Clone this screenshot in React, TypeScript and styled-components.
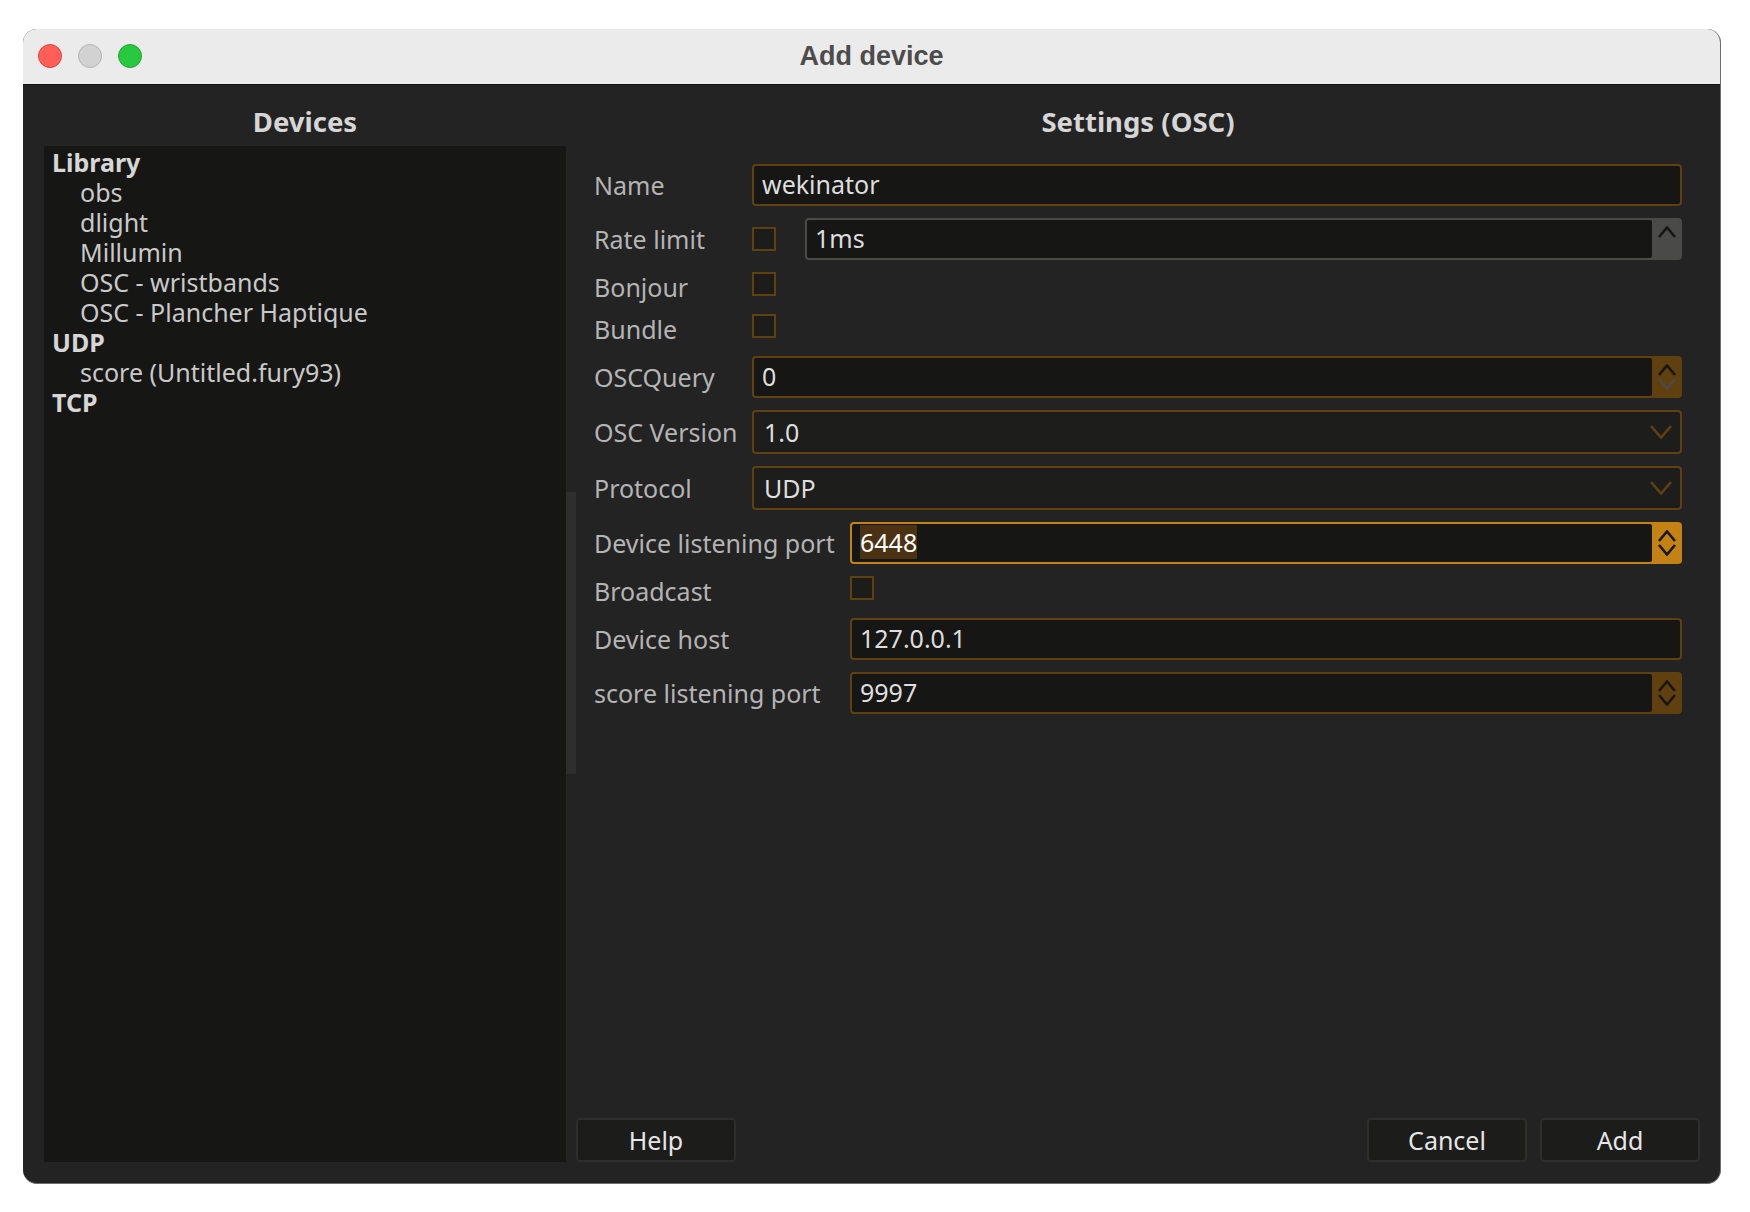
import React from "react";
import styled, { createGlobalStyle } from "styled-components";

const GlobalStyle = createGlobalStyle`
	html, body {
		margin: 0;
		padding: 0;
		background: #ffffff;
	}
	* {
		box-sizing: border-box;
	}
`;

const UI_FONT = `"Noto Sans", "Open Sans", sans-serif`;
const ORANGE_DIM = "#61400f";
const ORANGE = "#c58214";
const GREY = "#4a4a48";
const FIELD_BG = "#161614";

const Page = styled.div`
	width: 1750px;
	height: 1212px;
	padding: 29px 29px 28px 23px;
	background: #ffffff;
	font-family: ${UI_FONT};
`;

const Window = styled.div`
	width: 1698px;
	height: 1155px;
	display: flex;
	flex-direction: column;
	border-radius: 14px;
	overflow: hidden;
	background: #232323;
	border-right: 1px solid #6e6e6e;
	border-bottom: 1px solid #6e6e6e;
`;

const TitleBar = styled.div`
	height: 56px;
	flex: none;
	position: relative;
	display: flex;
	align-items: center;
	justify-content: center;
	padding-bottom: 1px;
	background: #ebebeb;
	border-bottom: 1px solid #111111;
`;

const Lights = styled.div`
	position: absolute;
	left: 15px;
	top: 15px;
	display: flex;
	gap: 16px;
`;

const Light = styled.span<{ $color: string; $edge: string }>`
	width: 24px;
	height: 24px;
	border-radius: 50%;
	background: ${(p) => p.$color};
	border: 1px solid ${(p) => p.$edge};
`;

const Title = styled.div`
	font-family: "Liberation Sans", Arial, sans-serif;
	font-size: 27px;
	font-weight: 700;
	color: #4c4c4c;
`;

const Body = styled.div`
	flex: 1;
	min-height: 0;
	display: flex;
	padding: 0 20px 21px 21px;
`;

const DevicesPane = styled.div`
	width: 522px;
	flex: none;
	display: flex;
	flex-direction: column;
`;

const PaneTitle = styled.div`
	height: 61px;
	flex: none;
	padding-top: 19px;
	text-align: center;
	font-size: 27.5px;
	line-height: 36px;
	font-weight: 700;
	color: #d6d6d6;
`;

const DeviceList = styled.div`
	flex: 1;
	padding: 1px 0 0 8px;
	background: ${FIELD_BG};
`;

const ListRow = styled.div<{ $group?: boolean }>`
	height: 30px;
	line-height: 30px;
	font-size: 25px;
	white-space: nowrap;
	padding-left: ${(p) => (p.$group ? 0 : 28)}px;
	font-weight: ${(p) => (p.$group ? 700 : 400)};
	color: ${(p) => (p.$group ? "#d6d6d6" : "#c9c9c9")};
`;

const ScrollGutter = styled.div`
	width: 10px;
	flex: none;
	padding-top: 407px;
`;

const ScrollHandle = styled.div`
	height: 282px;
	background: #2e2e2e;
`;

const SettingsPane = styled.div`
	flex: 1;
	min-width: 0;
	display: flex;
	flex-direction: column;
`;

const Form = styled.div`
	flex: 1;
	display: flex;
	flex-direction: column;
	gap: 12px;
	padding: 18px 18px 0 18px;
`;

const Row = styled.div<{ $h: number; $top?: boolean }>`
	display: flex;
	height: ${(p) => p.$h}px;
	align-items: ${(p) => (p.$top ? "flex-start" : "center")};
`;

const Label = styled.div<{ $w: number }>`
	width: ${(p) => p.$w}px;
	flex: none;
	height: 100%;
	display: flex;
	align-items: center;
	padding-bottom: 1px;
	font-size: 25px;
	white-space: nowrap;
	color: #b4b4b4;
`;

const CheckBox = styled.span`
	width: 24px;
	height: 24px;
	flex: none;
	background: #1c1c1a;
	border: 2px solid ${ORANGE_DIM};
`;

const Field = styled.div<{ $edge?: string }>`
	flex: 1;
	height: 100%;
	min-width: 0;
	display: flex;
	align-items: stretch;
	border: 2px solid ${(p) => p.$edge ?? ORANGE_DIM};
	border-radius: 4px;
	background: ${(p) => p.$edge ?? ORANGE_DIM};
`;

const RateField = styled(Field)`
	margin-left: 29px;
`;

const FieldText = styled.div`
	flex: 1;
	display: flex;
	align-items: center;
	padding: 0 0 2px 8px;
	border-radius: 2px;
	background: ${FIELD_BG};
	font-size: 25px;
	color: #dedede;
`;

const Selected = styled.span`
	background: #4a3212;
	color: #ffffff;
`;

const SpinButton = styled.div`
	width: 28px;
	flex: none;
	display: flex;
	flex-direction: column;
	align-items: center;
	padding: 6px 0 0 1px;
	gap: 2px;
`;

const Combo = styled.div`
	flex: 1;
	height: 100%;
	min-width: 0;
	display: flex;
	align-items: center;
	justify-content: space-between;
	padding: 0 8px 0 10px;
	border: 2px solid ${ORANGE_DIM};
	border-radius: 4px;
	background: #1d1d1b;
	font-size: 25px;
	color: #dedede;
`;

const Footer = styled.div`
	height: 44px;
	flex: none;
	display: flex;
	justify-content: space-between;
`;

const FooterGroup = styled.div`
	display: flex;
	gap: 13px;
`;

const Button = styled.button`
	width: 160px;
	height: 44px;
	padding: 0;
	border: 2px solid #2e2e2c;
	border-radius: 4px;
	background: #1c1c1a;
	font-family: ${UI_FONT};
	font-size: 25px;
	color: #e6e6e6;
`;

const Chevron = ({ up, color, w = 18, h = 12 }: { up?: boolean; color: string; w?: number; h?: number }) => (
	<svg width={w} height={h} viewBox={`0 0 ${w} ${h}`} fill="none">
		<path
			d={up ? `M1 ${h - 1} L${w / 2} 1.5 L${w - 1} ${h - 1}` : `M1 1 L${w / 2} ${h - 1.5} L${w - 1} 1`}
			stroke={color}
			strokeWidth="2.6"
		/>
	</svg>
);

const Spin = ({ downColor = "#161614" }: { downColor?: string }) => (
	<SpinButton>
		<Chevron up color="#161614" />
		<Chevron color={downColor} />
	</SpinButton>
);

const devices = [
	{ text: "Library", group: true },
	{ text: "obs" },
	{ text: "dlight" },
	{ text: "Millumin" },
	{ text: "OSC - wristbands" },
	{ text: "OSC - Plancher Haptique" },
	{ text: "UDP", group: true },
	{ text: "score (Untitled.fury93)" },
	{ text: "TCP", group: true },
];

export default function App() {
	return (
		<Page>
			<GlobalStyle />
			<Window>
				<TitleBar>
					<Lights>
						<Light $color="#ff5f57" $edge="#e0443e" />
						<Light $color="#d2d2d2" $edge="#b4b4b4" />
						<Light $color="#28c840" $edge="#1fa931" />
					</Lights>
					<Title>Add device</Title>
				</TitleBar>
				<Body>
					<DevicesPane>
						<PaneTitle>Devices</PaneTitle>
						<DeviceList>
							{devices.map((d) => (
								<ListRow key={d.text} $group={d.group}>
									{d.text}
								</ListRow>
							))}
						</DeviceList>
					</DevicesPane>
					<ScrollGutter>
						<ScrollHandle />
					</ScrollGutter>
					<SettingsPane>
						<PaneTitle>Settings (OSC)</PaneTitle>
						<Form>
							<Row $h={42}>
								<Label $w={158}>Name</Label>
								<Field>
									<FieldText>wekinator</FieldText>
								</Field>
							</Row>
							<Row $h={42}>
								<Label $w={158}>Rate limit</Label>
								<CheckBox />
								<RateField $edge={GREY}>
									<FieldText>1ms</FieldText>
									<SpinButton>
										<Chevron up color="#161614" />
									</SpinButton>
								</RateField>
							</Row>
							<Row $h={30} $top>
								<Label $w={158}>Bonjour</Label>
								<CheckBox />
							</Row>
							<Row $h={30} $top>
								<Label $w={158}>Bundle</Label>
								<CheckBox />
							</Row>
							<Row $h={42}>
								<Label $w={158}>OSCQuery</Label>
								<Field>
									<FieldText>0</FieldText>
									<Spin downColor={GREY} />
								</Field>
							</Row>
							<Row $h={44}>
								<Label $w={158}>OSC Version</Label>
								<Combo>
									1.0
									<Chevron color={ORANGE_DIM} w={22} h={14} />
								</Combo>
							</Row>
							<Row $h={44}>
								<Label $w={158}>Protocol</Label>
								<Combo>
									UDP
									<Chevron color={ORANGE_DIM} w={22} h={14} />
								</Combo>
							</Row>
							<Row $h={42}>
								<Label $w={256}>Device listening port</Label>
								<Field $edge={ORANGE}>
									<FieldText>
										<Selected>6448</Selected>
									</FieldText>
									<Spin />
								</Field>
							</Row>
							<Row $h={30} $top>
								<Label $w={256}>Broadcast</Label>
								<CheckBox />
							</Row>
							<Row $h={42}>
								<Label $w={256}>Device host</Label>
								<Field>
									<FieldText>127.0.0.1</FieldText>
								</Field>
							</Row>
							<Row $h={42}>
								<Label $w={256}>score listening port</Label>
								<Field>
									<FieldText>9997</FieldText>
									<Spin />
								</Field>
							</Row>
						</Form>
						<Footer>
							<Button>Help</Button>
							<FooterGroup>
								<Button>Cancel</Button>
								<Button>Add</Button>
							</FooterGroup>
						</Footer>
					</SettingsPane>
				</Body>
			</Window>
		</Page>
	);
}
